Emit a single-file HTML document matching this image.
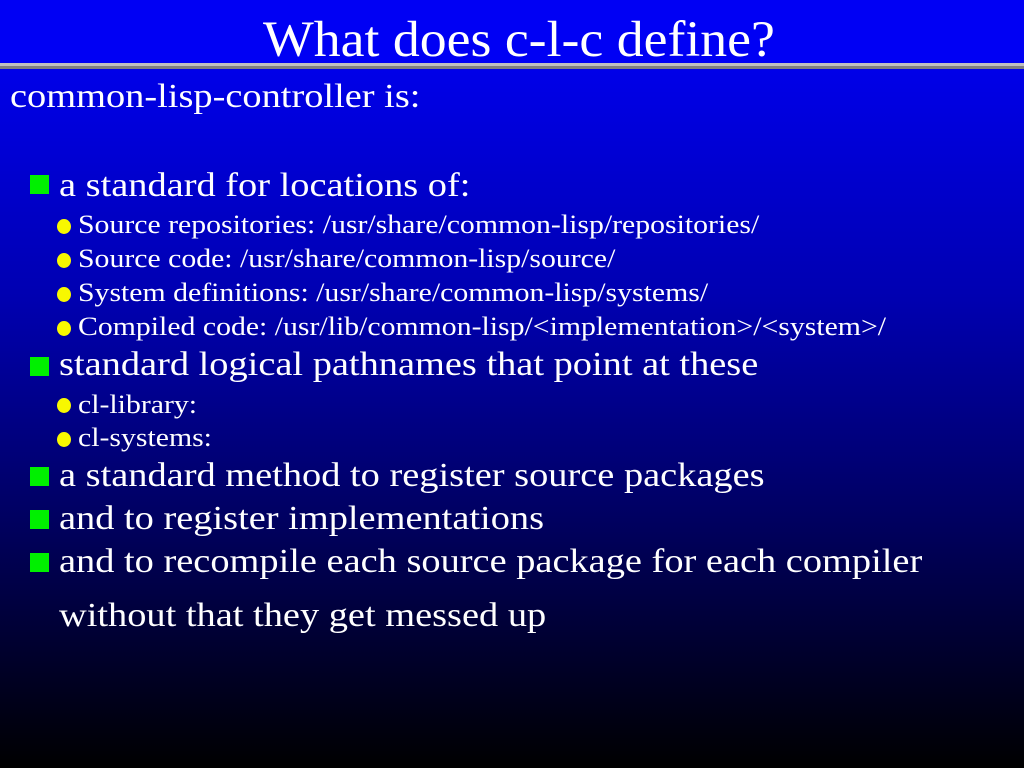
<!DOCTYPE html>
<html><head><meta charset="utf-8"><style>
html,body{margin:0;padding:0}
body{width:1024px;height:768px;position:relative;overflow:hidden;background:linear-gradient(#0000e8 70px,#0000b0 300px,#000060 520px,#000000 768px);font-family:"Liberation Serif",serif;color:#fff}
.hdr{position:absolute;left:0;top:0;width:1024px;height:63px;background:#0000f4}
.l1{position:absolute;left:0;top:63px;width:1024px;height:3px;background:#c0c0c0}
.l2{position:absolute;left:0;top:66px;width:1024px;height:3px;background:#808080}
.t{position:absolute;white-space:nowrap;line-height:1;transform-origin:0 0}
.b{font-size:34px;transform:scaleX(1.129)}
.s{font-size:26px;transform:scaleX(1.145)}
.sq{position:absolute;left:30px;width:19px;height:19px;background:#00f000}
.dot{position:absolute;left:57px;width:14px;height:15px;border-radius:50%;background:#f8f800}
</style></head><body>
<div class="hdr"></div><div class="l1"></div><div class="l2"></div>
<div class="t" style="left:263px;top:15px;font-size:51px;transform:scaleX(1.054)">What does c-l-c define?</div>
<div class="t b" style="left:10px;top:79.5px">common-lisp-controller is:</div>

<div class="sq" style="top:175px"></div>
<div class="t b" style="left:59px;top:168.5px">a standard for locations of:</div>
<div class="dot" style="top:219px"></div>
<div class="t s" style="left:78px;top:212px">Source repositories: /usr/share/common-lisp/repositories/</div>
<div class="dot" style="top:253px"></div>
<div class="t s" style="left:78px;top:246px">Source code: /usr/share/common-lisp/source/</div>
<div class="dot" style="top:287px"></div>
<div class="t s" style="left:78px;top:280px">System definitions: /usr/share/common-lisp/systems/</div>
<div class="dot" style="top:321px"></div>
<div class="t s" style="left:78px;top:314px">Compiled code: /usr/lib/common-lisp/&lt;implementation&gt;/&lt;system&gt;/</div>

<div class="sq" style="top:357px"></div>
<div class="t b" style="left:59px;top:347.5px">standard logical pathnames that point at these</div>
<div class="dot" style="top:398px"></div>
<div class="t s" style="left:78px;top:392px">cl-library:</div>
<div class="dot" style="top:432px"></div>
<div class="t s" style="left:78px;top:425px">cl-systems:</div>

<div class="sq" style="top:467px"></div>
<div class="t b" style="left:59px;top:458.5px">a standard method to register source packages</div>
<div class="sq" style="top:510px"></div>
<div class="t b" style="left:59px;top:501.5px">and to register implementations</div>
<div class="sq" style="top:553px"></div>
<div class="t b" style="left:59px;top:544.5px">and to recompile each source package for each compiler</div>
<div class="t b" style="left:59px;top:598.5px">without that they get messed up</div>
</body></html>
